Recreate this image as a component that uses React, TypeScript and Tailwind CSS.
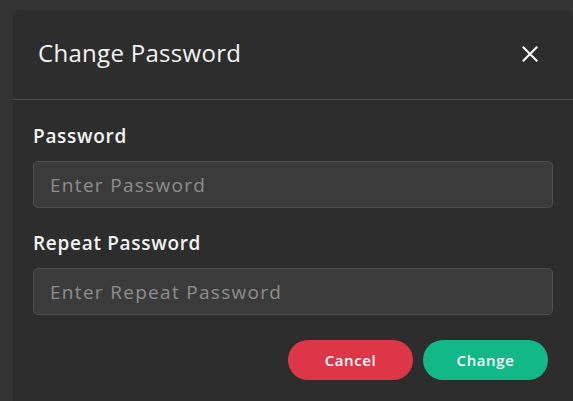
import React from "react";

export default function App() {
  const font = { fontFamily: "'Open Sans', 'Noto Sans', sans-serif" };
  return (
    <div className="w-[573px] h-[401px] overflow-hidden bg-[#343434] pl-[13px] pt-[10px]" style={font}>
      <div className="w-[560px] h-[420px] bg-[#2d2d2d] rounded-[8px] flex flex-col">
        <div className="h-[90px] flex items-center justify-between pl-[25px] pr-[35px] border-b border-[#4b4b4b]">
          <h2 className="text-[24px] font-medium text-[#f4f4f4] tracking-[0.3px] -mt-[4px]">Change Password</h2>
          <svg width="16" height="16" viewBox="0 0 16 16" className="text-white -mt-[2px]">
            <path d="M1.5 1.5 L14.5 14.5 M14.5 1.5 L1.5 14.5" stroke="currentColor" strokeWidth="2" strokeLinecap="square" />
          </svg>
        </div>
        <div className="px-[20px] pt-[24px] flex flex-col">
          <label className="text-[19px] font-semibold text-[#f4f4f4] leading-[24px] tracking-[0.7px]">Password</label>
          <input
            placeholder="Enter Password"
            className="mt-[13px] h-[47px] w-full rounded-[5px] border border-[#4f4f4f] bg-[#3b3b3b] px-[16px] text-[19px] tracking-[1.3px] text-white placeholder-[#8e8e8e] outline-none"
            style={font}
          />
          <label className="mt-[23px] text-[19px] font-semibold text-[#f4f4f4] leading-[24px] tracking-[0.7px]">Repeat Password</label>
          <input
            placeholder="Enter Repeat Password"
            className="mt-[13px] h-[47px] w-full rounded-[5px] border border-[#4f4f4f] bg-[#3b3b3b] px-[16px] text-[19px] tracking-[1.3px] text-white placeholder-[#8e8e8e] outline-none"
            style={font}
          />
          <div className="mt-[25px] flex justify-end gap-[10px] pr-[5px]">
            <button className="w-[125px] h-[40px] rounded-full bg-[#dd3747] text-white text-[15px] font-semibold tracking-[0.6px]" style={font}>Cancel</button>
            <button className="w-[125px] h-[40px] rounded-full bg-[#12b886] text-white text-[15px] font-semibold tracking-[0.6px]" style={font}>Change</button>
          </div>
        </div>
      </div>
    </div>
  );
}
